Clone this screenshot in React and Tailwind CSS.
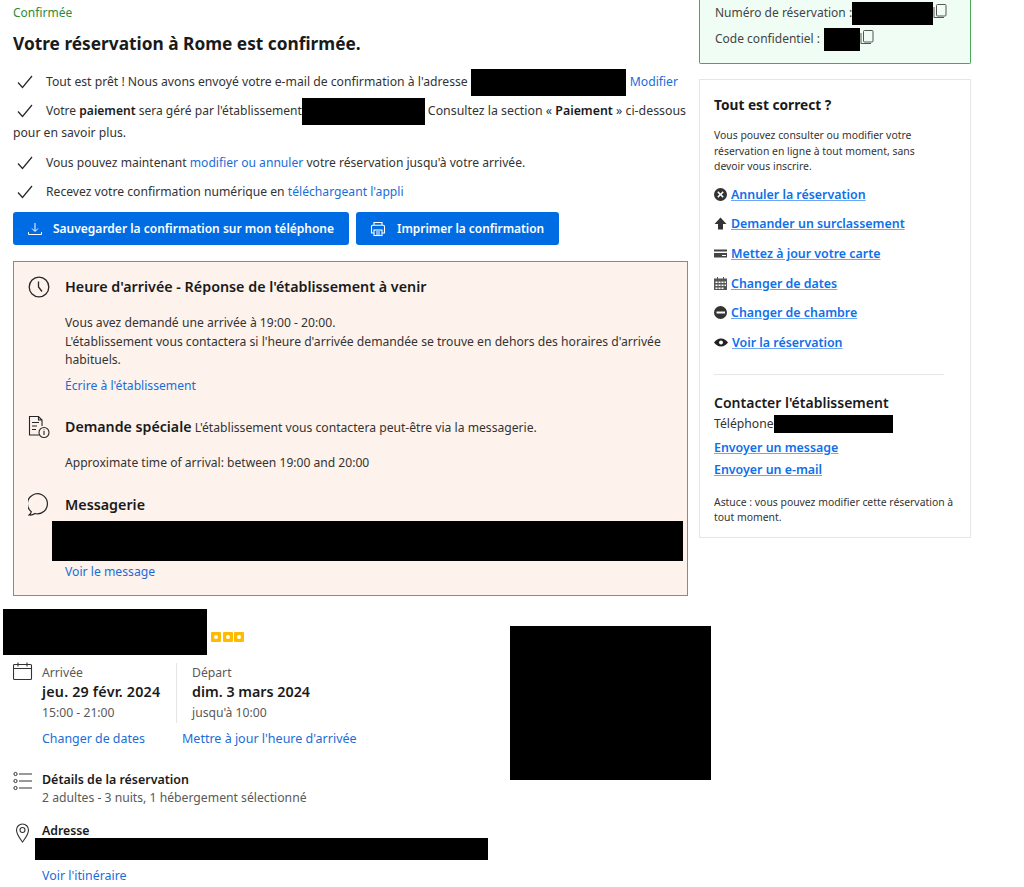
const Check = () => (
  <svg width="16" height="14" viewBox="0 0 16 14" fill="none" className="shrink-0"><path d="M1 7.5 L5.5 12.5 L15 1" stroke="#262626" strokeWidth="1.2" /></svg>
);
const Blk = ({ w, h, cls = "" }) => <span className={`inline-block bg-black align-middle shrink-0 ${cls}`} style={{ width: w, height: h }} />;
const L = ({ children }) => <a className="text-[#1a6dd9]">{children}</a>;
const B = ({ children }) => <a className="font-semibold text-[#0f6fe8] underline decoration-[#6ea6f0] underline-offset-1">{children}</a>;
const Copy = () => (
  <svg width="14" height="15" viewBox="0 0 14 15" fill="none" className="-mt-[3px] shrink-0" stroke="#555"><rect x="3.5" y="0.5" width="9.5" height="11.5" rx="1" /><path d="M1 3v10.5h10" /></svg>
);

export default function App() {
  return (
    <div className="relative h-[887px] w-[1024px] overflow-hidden bg-white font-['Noto_Sans','Open_Sans',sans-serif] text-[12.2px] text-[#333]">
      <div className="flex">
        <div className="w-[699px] pl-[13px] pr-[11px]">
          <div className="h-[25px] pt-[4px] text-[12px] leading-[17px] text-[#2f8a3a]">Confirmée</div>
          <h1 className="mt-[6px] h-[30px] text-[17.3px] font-bold leading-[26px] text-[#1a1a1a]">Votre réservation à Rome est confirmée.</h1>
          <div className="mt-[8px] flex h-[26px] items-center gap-[13px] pl-[4px]">
            <Check /><span className="whitespace-nowrap">Tout est prêt ! Nous avons envoyé votre e-mail de confirmation à l'adresse</span>
            <Blk w={155} h={27} cls="-ml-[10px]" /><span className="-ml-[9px]"><L>Modifier</L></span>
          </div>
          <div className="mt-[3px] flex h-[26px] items-center gap-[13px] pl-[4px]">
            <Check /><span className="whitespace-nowrap text-[12.05px]">Votre <b className="font-semibold text-[#1a1a1a]">paiement</b> sera géré par l'établissement</span>
            <Blk w={123} h={27} cls="-ml-[13px]" /><span className="-ml-[10px] whitespace-nowrap text-[12.35px]">Consultez la section « <b className="font-semibold text-[#1a1a1a]">Paiement</b> » ci-dessous</span>
          </div>
          <div className="-mt-[1px] h-[20px] leading-[20px]">pour en savoir plus.</div>
          <div className="mt-[7px] flex h-[26px] items-center gap-[13px] pl-[4px] text-[12.1px]">
            <Check /><span>Vous pouvez maintenant <L>modifier ou annuler</L> votre réservation jusqu'à votre arrivée.</span>
          </div>
          <div className="mt-[3px] flex h-[26px] items-center gap-[13px] pl-[4px] text-[12.15px]">
            <Check /><span>Recevez votre confirmation numérique en <L>téléchargeant l'appli</L></span>
          </div>
          <div className="mt-[7px] flex gap-[7px]">
            <button className="flex h-[33px] w-[336px] items-center gap-[10px] rounded-[3px] bg-[#006ce4] pl-[14px] text-[12px] font-semibold text-white">
              <svg width="16" height="14" viewBox="0 0 16 14" fill="none" stroke="#fff" strokeWidth="1"><path d="M8 1v8M5 6.5 8 9.5l3-3M1.5 10v2.500h13V10" /></svg>
              Sauvegarder la confirmation sur mon téléphone
            </button>
            <button className="flex h-[33px] w-[203px] items-center gap-[11px] rounded-[3px] bg-[#006ce4] pl-[14px] text-[11.9px] font-semibold text-white">
              <svg width="16" height="16" viewBox="0 0 16 16" fill="none" stroke="#fff" strokeWidth="1.1"><path d="M4 4V1.500h8V4M4 12H1.500V5.500a1.200 1.200 0 0 1 1.200-1.200h10.600a1.200 1.200 0 0 1 1.200 1.200V12H12" /><rect x="4" y="9" width="8" height="5.500" /><path d="M6 11h4M6 13h4" /></svg>
              Imprimer la confirmation
            </button>
          </div>
          <div className="mt-[16px] h-[335px] w-[675px] border border-orange-500 bg-[#fdf2ec] pl-[14px] pt-[14px]">
            <div className="flex items-center gap-[15px]">
              <svg width="22" height="22" viewBox="0 0 22 22" fill="none" stroke="#262626" strokeWidth="1.3" className="shrink-0"><circle cx="11" cy="11" r="9.800" /><path d="M10.500 5.500v5.500l3.500 4.500" /></svg>
              <div className="text-[14.3px] font-semibold leading-[22px] text-[#1a1a1a]">Heure d'arrivée - Réponse de l'établissement à venir</div>
            </div>
            <div className="mt-[16px] w-[640px] pl-[37px] text-[12.15px] leading-[18.5px]">
              <p>Vous avez demandé une arrivée à 19:00 - 20:00.</p>
              <p>L'établissement vous contactera si l'heure d'arrivée demandée se trouve en dehors des horaires d'arrivée habituels.</p>
              <p className="mt-[7px]"><L>Écrire à l'établissement</L></p>
            </div>
            <div className="mt-[20px] flex items-center gap-[15px]">
              <svg width="22" height="24" viewBox="0 0 22 24" fill="none" stroke="#262626" strokeWidth="1.1" className="shrink-0"><path d="M11 20H1.500V1.500h9l3.500 3.500v6M10.500 1.500V5H14M4 7.500h7M4 11h5M4 14.500h4" /><circle cx="16" cy="17.500" r="5" /><path d="M16 16v4M16 14.500v.8" /></svg>
              <div className="whitespace-nowrap text-[12.15px] leading-[22px]"><span className="text-[14.2px] font-semibold text-[#1a1a1a]">Demande spéciale</span> L'établissement vous contactera peut-être via la messagerie.</div>
            </div>
            <div className="mt-[14px] pl-[37px] text-[12.1px] leading-[20px]">Approximate time of arrival: between 19:00 and 20:00</div>
            <div className="mt-[20px] flex items-center gap-[14px]">
              <svg width="23" height="23" viewBox="0 0 23 23" fill="none" stroke="#262626" strokeWidth="1.2" className="shrink-0"><path d="M1 22c1.400-.8 2-1.600 2.300-3.300A10 10 0 1 1 7 20.500 8 8 0 0 1 1 22Z" /></svg>
              <div className="text-[14.3px] font-semibold leading-[22px] text-[#1a1a1a]">Messagerie</div>
            </div>
            <div className="mt-[5px] ml-[24px] h-[40px] w-[631px] bg-black" />
            <div className="mt-[2px] pl-[37px] text-[12.2px] leading-[18px]"><L>Voir le message</L></div>
          </div>
        </div>
        <aside className="w-[272px]">
          <div className="h-[64px] rounded-b-[2px] border-x border-b border-[#4aa85a] bg-[#f0fdf4] pl-[15px] pt-[1px] text-[12px] text-[#444]">
            <div className="flex h-[24px] items-center whitespace-nowrap">Numéro de réservation :<Blk w={81} h={23} /><Copy /></div>
            <div className="mt-[2px] flex h-[24px] items-center whitespace-nowrap">Code confidentiel :<Blk w={36} h={23} cls="ml-[4px]" /><Copy /></div>
          </div>
          <div className="mt-[15px] h-[459px] border border-[#e6e6e6] pl-[14px] pt-[14px]">
            <h2 className="text-[13.7px] font-bold leading-[22px] text-[#1a1a1a]">Tout est correct ?</h2>
            <p className="mt-[12px] w-[225px] text-[10.4px] leading-[15.5px]">Vous pouvez consulter ou modifier votre réservation en ligne à tout moment, sans devoir vous inscrire.</p>
            <div className="mt-[11px] flex flex-col gap-[12.7px] text-[12.4px] leading-[17px]">
              <div className="flex items-center gap-[4px]">
                <svg width="13" height="13" viewBox="0 0 13 13" fill="#333"><path fillRule="evenodd" d="M6.500 0a6.500 6.500 0 1 1 0 13 6.500 6.500 0 0 1 0-13ZM4.400 3.300 3.300 4.400l2.100 2.100-2.100 2.100 1.100 1.100 2.100-2.100 2.100 2.100 1.100-1.100-2.100-2.100 2.100-2.100-1.100-1.100-2.100 2.100Z" /></svg>
                <B>Annuler la réservation</B>
              </div>
              <div className="flex items-center gap-[4px]">
                <svg width="13" height="13" viewBox="0 0 13 13" fill="#333"><path d="M6.500 0.500 12.500 7H9v5.500H4V7H0.500Z" /></svg>
                <B>Demander un surclassement</B>
              </div>
              <div className="flex items-center gap-[4px]">
                <svg width="13" height="13" viewBox="0 0 13 13" fill="#444"><path fillRule="evenodd" d="M0 2.500h13v8H0ZM0 4.500v1.500h13V4.500ZM8 8v1h4V8Z" /></svg>
                <B>Mettez à jour votre carte</B>
              </div>
              <div className="flex items-center gap-[4px]">
                <svg width="13" height="13" viewBox="0 0 13 13" fill="#555"><path fillRule="evenodd" d="M3 0h1v1.500h5V0h1v1.500h3V13H0V1.500h3ZM1.500 4.500v1.500h2V4.500Zm3 0v1.500h2V4.500Zm3 0v1.500h2V4.500Zm-6 3V9h2V7.500Zm3 0V9h2V7.500Zm3 0V9h2V7.500Zm3-3v1.500H12V4.500Zm0 3V9H12V7.500Zm-9 3V12h2v-1.500Zm3 0V12h2v-1.500Zm3 0V12h2v-1.500Z" /></svg>
                <B>Changer de dates</B>
              </div>
              <div className="flex items-center gap-[4px]">
                <svg width="13" height="13" viewBox="0 0 13 13" fill="#333"><path fillRule="evenodd" d="M6.500 0a6.500 6.500 0 1 1 0 13 6.500 6.500 0 0 1 0-13ZM2.500 5.500v2h8.500v-2Z" /></svg>
                <B>Changer de chambre</B>
              </div>
              <div className="flex items-center gap-[4px]">
                <svg width="14" height="13" viewBox="0 0 14 13" fill="#222"><path fillRule="evenodd" d="M7 2.500c3 0 5.500 2 7 4-1.500 2-4 4-7 4s-5.500-2-7-4c1.500-2 4-4 7-4ZM7 4.500a2 2 0 1 0 0 4 2 2 0 0 0 0-4Z" /></svg>
                <B>Voir la réservation</B>
              </div>
            </div>
            <div className="mt-[23px] w-[230px] border-t border-[#e6e6e6]" />
            <h2 className="mt-[18px] text-[14px] font-semibold leading-[20px] text-[#1a1a1a]">Contacter l'établissement</h2>
            <div className="flex h-[23px] items-center text-[12.2px]">Téléphone<Blk w={119} h={18} /></div>
            <div className="mt-[2px] text-[12.4px] font-semibold leading-[20px]"><B>Envoyer un message</B></div>
            <div className="mt-[2px] text-[12.4px] font-semibold leading-[20px]"><B>Envoyer un e-mail</B></div>
            <p className="mt-[15px] w-[245px] text-[10.4px] leading-[15.5px]">Astuce : vous pouvez modifier cette réservation à tout moment.</p>
          </div>
        </aside>
      </div>
      <div className="mt-[13px] flex pl-[3px]">
        <div className="w-[507px]">
          <div className="flex items-end gap-[4px]">
            <Blk w={204} h={46} />
            <div className="mb-[13px] flex gap-[1.5px]">
              {[0, 1, 2].map((i) => (
                <span key={i} className="flex h-[10px] w-[10px] items-center justify-center rounded-[1px] bg-[#febb02]"><span className="h-[4px] w-[4px] rounded-full bg-white" /></span>
              ))}
            </div>
          </div>
          <div className="mt-[8px] flex pl-[10px]">
            <svg width="20" height="20" viewBox="0 0 20 20" fill="none" stroke="#333" strokeWidth="1.1" className="-mt-[1px] shrink-0"><rect x="0.500" y="2.500" width="18" height="15" rx="1" /><path d="M0.500 6.500h18M5 0.500v4M14 0.500v4" /></svg>
            <div className="ml-[9px] w-[135px] border-r border-[#e6e6e6] text-[12.2px] leading-[20px]">
              <div className="text-[#595959]">Arrivée</div>
              <div className="-mt-[1px] mb-[1px] text-[14.3px] font-semibold tracking-[0.2px] text-[#1a1a1a]">jeu. 29 févr. 2024</div>
              <div className="text-[#595959]">15:00 - 21:00</div>
            </div>
            <div className="ml-[15px] text-[12.2px] leading-[20px]">
              <div className="text-[#595959]">Départ</div>
              <div className="-mt-[1px] mb-[1px] text-[14.3px] font-semibold text-[#1a1a1a]">dim. 3 mars 2024</div>
              <div className="text-[#595959]">jusqu'à 10:00</div>
            </div>
          </div>
          <div className="mt-[6px] flex pl-[39px] text-[12.4px] leading-[20px]"><span className="w-[140px]"><L>Changer de dates</L></span><span className="text-[12.5px]"><L>Mettre à jour l'heure d'arrivée</L></span></div>
          <div className="mt-[22px] flex pl-[10px]">
            <svg width="20" height="20" viewBox="0 0 20 20" fill="none" stroke="#333" strokeWidth="1" className="shrink-0"><circle cx="2.500" cy="3" r="1.600" /><circle cx="2.500" cy="10" r="1.600" /><circle cx="2.500" cy="17" r="1.600" /><path d="M6 3h13M6 10h13M6 17h13" /></svg>
            <div className="ml-[9px] text-[12.2px] leading-[18px]"><div className="text-[12.45px] font-semibold text-[#1a1a1a]">Détails de la réservation</div><div className="text-[#595959]">2 adultes - 3 nuits, 1 hébergement sélectionné</div></div>
          </div>
          <div className="mt-[16px] flex pl-[10px]">
            <svg width="20" height="20" viewBox="0 0 20 20" fill="none" stroke="#333" strokeWidth="1.1" className="shrink-0"><path d="M9.500 19C7 15.500 3.500 11.500 3.500 7a6 6 0 0 1 12 0c0 4.500-3.500 8.500-6 12Z" /><circle cx="9.500" cy="7" r="2.500" /></svg>
            <div className="ml-[9px] text-[12.3px]"><div className="font-semibold leading-[16px] text-[#1a1a1a]">Adresse</div></div>
          </div>
          <div className="-mt-[5px] ml-[32px] h-[22px] w-[453px] bg-black" />
          <div className="mt-[6px] pl-[39px] text-[12.4px] leading-[20px]"><L>Voir l'itinéraire</L></div>
        </div>
        <div className="mt-[17px] h-[154px] w-[201px] bg-black" />
      </div>
    </div>
  );
}
